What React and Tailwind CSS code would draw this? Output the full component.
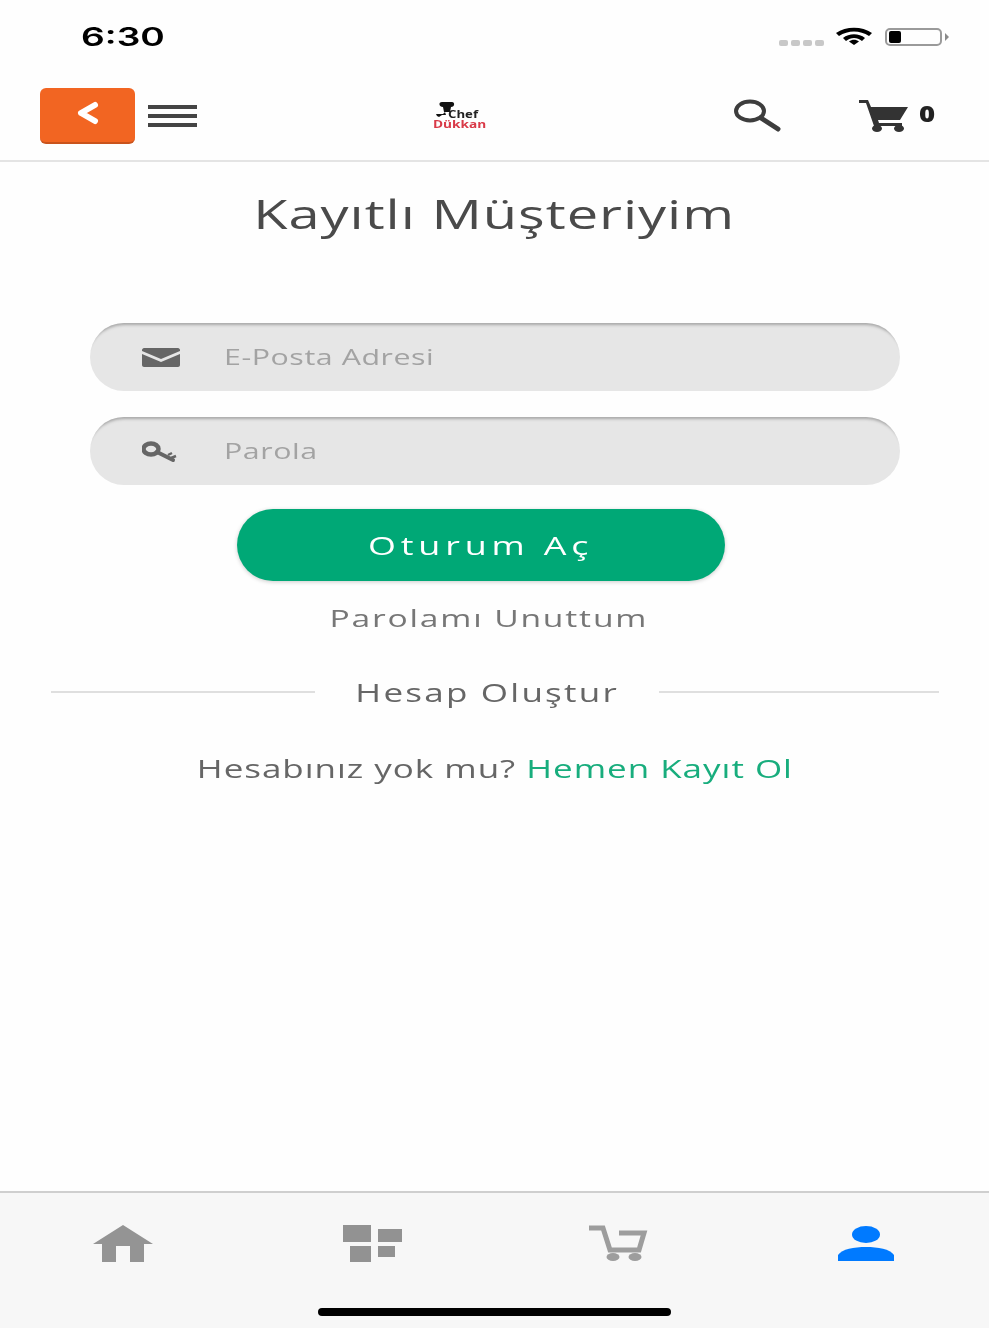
const sans = { fontFamily: '"Open Sans", sans-serif' };

export default function App() {
  return (
    <div className="w-[1000px] h-[1334px] bg-white overflow-hidden" style={sans}>
      <div className="w-[989px] h-[1328px] flex flex-col bg-[#fefefe] blur-[0.7px]">
        {/* status bar */}
        <div className="h-[72px] shrink-0 flex items-center pl-[81px] pr-[40px] pt-[1px]">
          <span className="inline-block origin-left scale-x-[1.43] text-[26px] font-semibold text-black leading-none" style={{ fontFamily: 'Inter, sans-serif' }}>6:30</span>
          <div className="ml-auto flex items-center">
            <div className="flex gap-[3px] mt-[12px] mr-[11px]">
              <div className="w-[9px] h-[6px] rounded-[2px] bg-[#c8c8c8]"></div>
              <div className="w-[9px] h-[6px] rounded-[2px] bg-[#c8c8c8]"></div>
              <div className="w-[9px] h-[6px] rounded-[2px] bg-[#c8c8c8]"></div>
              <div className="w-[9px] h-[6px] rounded-[2px] bg-[#c8c8c8]"></div>
            </div>
            <svg width="38" height="18" viewBox="0 0 38 18" className="mr-[12px] -mt-[2px]">
              <path d="M1 6 C11 -1 27 -1 37 6 L34 9 C25 3 13 3 4 9 Z" fill="#000" />
              <path d="M8 11 C14 6 24 6 30 11 L27 14 C22 10 16 10 11 14 Z" fill="#000" />
              <path d="M14 14.5 C17 12 21 12 24 14.500 L19 18 Z" fill="#000" />
            </svg>
            <div className="w-[57px] h-[18px] border-2 border-[#9a9a9a] rounded-[5px] p-[1px] pl-[2px]">
              <div className="w-[12px] h-full bg-black rounded-[2px]"></div>
            </div>
            <div className="ml-[3px] w-0 h-0 border-y-[4px] border-y-transparent border-l-[4px] border-l-[#8a8a8a]"></div>
          </div>
        </div>

        {/* header */}
        <div className="h-[90px] shrink-0 flex items-center border-b-2 border-[#e4e4e4] pl-[40px] pb-[1px]">
          <div className="w-[95px] h-[56px] rounded-[6px] bg-[#f26522] border-b-2 border-[#c9531c] flex items-center justify-center">
            <svg width="26" height="26" viewBox="0 0 26 26" className="-mt-[3px]">
              <path d="M20 5 L6 13 L20 21" fill="none" stroke="#fff" strokeWidth="6" strokeLinejoin="round" strokeLinecap="round" />
            </svg>
          </div>
          <div className="ml-[13px] w-[49px] flex flex-col gap-[5px]">
            <div className="h-[4px] bg-[#444]"></div>
            <div className="h-[4px] bg-[#444]"></div>
            <div className="h-[4px] bg-[#444]"></div>
          </div>
          <div className="ml-[236px] w-[52px] h-[28px] relative">
            <svg width="20" height="16" viewBox="0 0 20 16" className="absolute left-[2px] top-0">
              <path d="M7 0 H17 C20 0 20 5 16 5 L15 10 H9 L8 5 C4 5 3 0 7 0 Z M1 12 H8 L10 10 L11 13 H7 L4 15 L2 14 Z" fill="#111" />
            </svg>
            <span className="absolute left-[15px] top-[7px] inline-block origin-left scale-x-[1.2] text-[11px] leading-[10px] font-bold text-[#222]">Chef</span>
            <span className="absolute left-0 top-[17px] inline-block origin-left scale-x-[1.24] text-[11px] leading-[10px] font-bold text-[#d93a48]">Dükkan</span>
          </div>
          <svg width="49" height="33" viewBox="0 0 49 33" className="ml-[248px] -mt-[1px]">
            <ellipse cx="17" cy="12" rx="14" ry="9.500" fill="none" stroke="#3d3d3d" strokeWidth="4" />
            <path d="M28 19 L45 30" fill="none" stroke="#3d3d3d" strokeWidth="5" strokeLinecap="round" />
          </svg>
          <svg width="50" height="33" viewBox="0 0 50 33" className="ml-[77px] -mt-[1px]">
            <path d="M0 1 H9 L12 8 H49 L41 21 H19 L20 24 H43 V27 H15 L7 4 H0 Z" fill="#333" />
            <ellipse cx="18" cy="29.500" rx="5" ry="3.500" fill="#333" />
            <ellipse cx="40" cy="29.500" rx="5" ry="3.500" fill="#333" />
          </svg>
          <span className="ml-[10px] -mt-[5px] inline-block origin-left scale-x-[1.25] text-[22px] leading-none font-extrabold text-[#222]">0</span>
        </div>

        {/* body */}
        <div className="flex-1 flex flex-col">
          <div className="h-[104px] flex justify-center pt-[26px] pr-[1px]">
            <span className="inline-block scale-x-[1.4] tracking-[0.7px] text-[40px] leading-[52px] text-[#4a4a4a] whitespace-nowrap">Kayıtlı Müşteriyim</span>
          </div>
          <div className="pl-[90px] pr-[89px] pt-[57px] flex flex-col gap-[26px]">
            <div className="h-[68px] rounded-[35px] bg-[#e6e6e6] shadow-[inset_0_6px_3px_-4px_#a8a8a8] flex items-center">
              <svg width="38" height="19" viewBox="0 0 38 19" className="ml-[52px] mt-[1px] shrink-0">
                <path d="M2 0 H36 C37 0 38 1 38 2 V3 L19 11 L0 3 V2 C0 1 1 0 2 0 Z" fill="#666" />
                <path d="M0 6 L19 14 L38 6 V17 C38 18 37 19 36 19 H2 C1 19 0 18 0 17 Z" fill="#666" />
              </svg>
              <span className="ml-[44px] -mt-[2px] inline-block origin-left scale-x-[1.38] tracking-[0.4px] text-[22px] leading-none text-[#a3a3a3] whitespace-nowrap">E-Posta Adresi</span>
            </div>
            <div className="h-[68px] rounded-[35px] bg-[#e6e6e6] shadow-[inset_0_6px_3px_-4px_#a8a8a8] flex items-center">
              <svg width="36" height="22" viewBox="0 0 36 22" className="ml-[52px] mt-[1px] shrink-0">
                <ellipse cx="9" cy="8" rx="7.500" ry="5.500" fill="none" stroke="#666" strokeWidth="4.500" />
                <path d="M15 11 L31 19" fill="none" stroke="#666" strokeWidth="4" strokeLinecap="round" />
                <path d="M26 14 L30 12 M29 17 L34 15" fill="none" stroke="#666" strokeWidth="2.500" />
              </svg>
              <span className="ml-[46px] -mt-[3px] inline-block origin-left scale-x-[1.38] tracking-[0.4px] text-[22px] leading-none text-[#a3a3a3] whitespace-nowrap">Parola</span>
            </div>
          </div>
          <div className="mt-[24px] pl-[237px]">
            <div className="w-[488px] h-[72px] rounded-[36px] bg-[#00a876] shadow-[0_1px_4px_rgba(0,0,0,0.2)] flex items-center justify-center">
              <span className="inline-block scale-x-[1.38] text-[26px] tracking-[3.5px] leading-none text-white whitespace-nowrap">Oturum Aç</span>
            </div>
          </div>
          <div className="mt-[20px] h-[34px] flex justify-center items-center pr-[11px]">
            <span className="inline-block scale-x-[1.4] tracking-[1.3px] text-[24px] leading-none text-[#777] whitespace-nowrap">Parolamı Unuttum</span>
          </div>
          <div className="mt-[37px] h-[40px] pl-[51px] pr-[50px] flex items-center">
            <div className="w-[264px] h-[2px] bg-[#dfdfdf]"></div>
            <div className="flex-1 flex justify-center">
              <span className="inline-block scale-x-[1.4] tracking-[1.6px] text-[25px] leading-none text-[#666] whitespace-nowrap">Hesap Oluştur</span>
            </div>
            <div className="w-[280px] h-[2px] bg-[#dfdfdf]"></div>
          </div>
          <div className="mt-[36px] h-[40px] flex justify-center items-center">
            <span className="inline-block scale-x-[1.4] tracking-[0.7px] text-[25px] leading-none text-[#666] whitespace-nowrap">
              Hesabınız yok mu? <span className="text-[#18ad7d]">Hemen Kayıt Ol</span>
            </span>
          </div>
        </div>

        {/* tab bar */}
        <div className="h-[137px] shrink-0 bg-[#f7f7f7] border-t-2 border-[#cfcfcf] flex flex-col">
          <div className="h-[85px] relative flex items-center">
            <svg width="60" height="37" viewBox="0 0 60 37" className="ml-[93px] mt-[15px]">
              <path d="M30 0 L60 19 H51 V37 H37 V21 H23 V37 H9 V19 H0 Z" fill="#949494" />
            </svg>
            <svg width="59" height="37" viewBox="0 0 59 37" className="ml-[190px] mt-[15px]">
              <path d="M0 0 H28 V17 H0 Z M35 4 H59 V17 H35 Z M7 21 H28 V37 H7 Z M35 21 H52 V32 H35 Z" fill="#929292" />
            </svg>
            <svg width="59" height="36" viewBox="0 0 59 36" className="ml-[187px] mt-[15px]">
              <path d="M0 3 H14 L21 25 H50 L55 8 H30" fill="none" stroke="#9d9d9d" strokeWidth="5" strokeLinejoin="miter" />
              <ellipse cx="24" cy="32" rx="6.500" ry="4" fill="#9d9d9d" />
              <ellipse cx="46" cy="32" rx="6.500" ry="4" fill="#9d9d9d" />
            </svg>
            <svg width="56" height="35" viewBox="0 0 56 35" className="ml-[190px] mt-[15px]">
              <ellipse cx="28" cy="8.500" rx="14" ry="8.500" fill="#007aff" />
              <path d="M0 35 V29 C4 23 16 21 28 21 C40 21 52 23 56 29 V35 Z" fill="#007aff" />
            </svg>
          </div>
          <div className="pl-[318px] pt-[30px]">
            <div className="w-[353px] h-[8px] rounded-full bg-black"></div>
          </div>
        </div>
      </div>
    </div>
  );
}
